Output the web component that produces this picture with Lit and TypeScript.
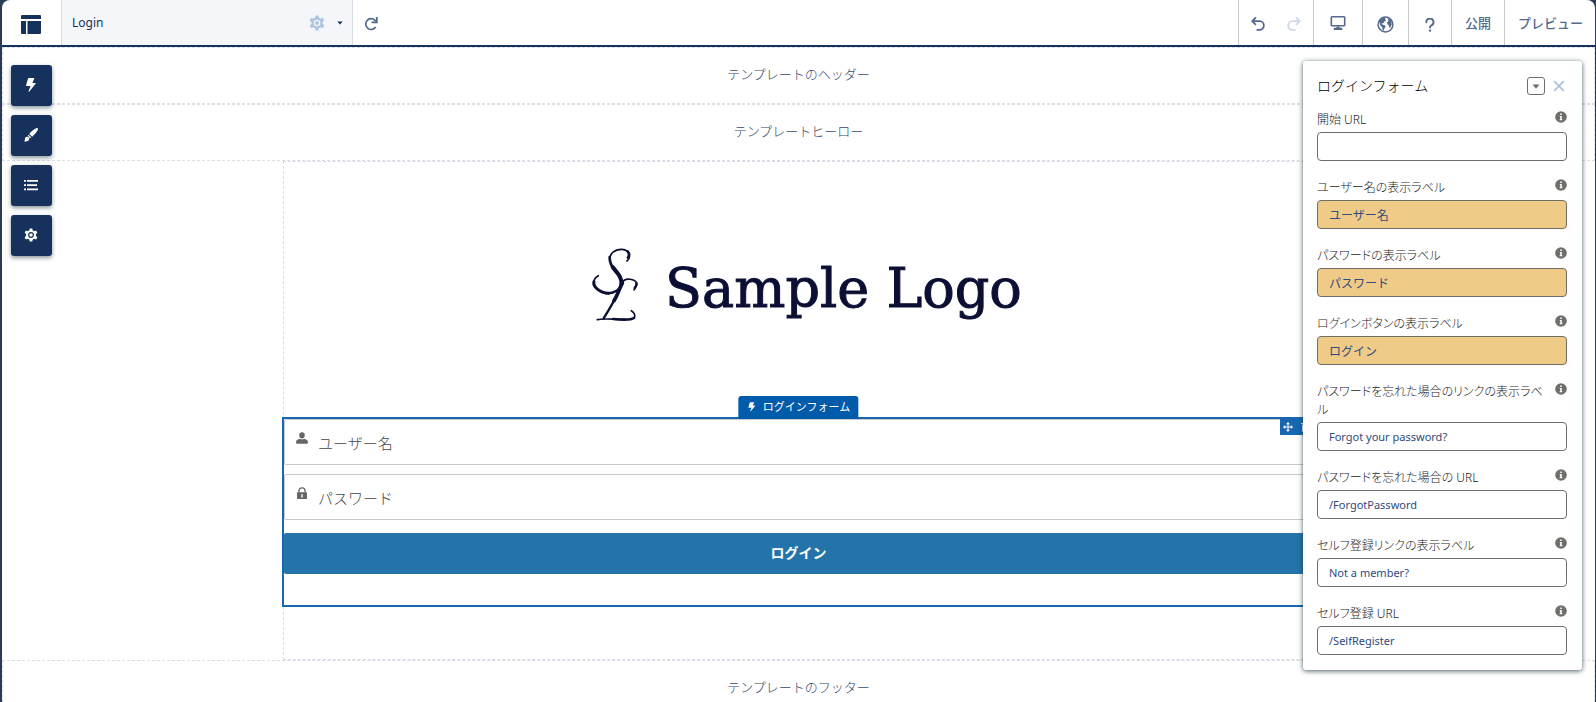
import { LitElement, html, css, svg } from "lit";
import { customElement, property, state } from "lit/decorators.js";
import { classMap } from "lit/directives/class-map.js";

const gear = svg`
  <path fill="currentColor" fill-rule="evenodd" d="M8.4 0h3.2l.6 2.7c.6.2 1.200.5 1.700.9l2.600-.9 1.700 2.900-2 1.900c.1.600.1 1.300 0 1.900l2 2-1.600 2.800-2.700-.8c-.5.4-1.100.7-1.700.9L11.600 17H8.400l-.6-2.700c-.6-.2-1.200-.5-1.700-.9l-2.700.8-1.600-2.800 2-2c-.1-.6-.1-1.300 0-1.900l-2-1.900 1.700-2.900 2.600.9c.5-.4 1.100-.7 1.700-.9zM10 4.800a3.700 3.700 0 1 0 0 7.400 3.700 3.700 0 0 0 0-7.400z"/>
  <circle cx="10" cy="8.500" r="2.200" fill="currentColor"/>`;

const bolt = svg`<path fill="currentColor" d="M4.500 0h6.200L8.500 5.300h3.300c.5 0 .6.400.3.700L5 14.600c-.3.300-.7.100-.6-.3L6.500 8.600H2.200c-.5 0-.6-.3-.5-.6L3.800.5c.1-.3.300-.5.700-.5z"/>`;

const icons = {
  layout: { box: "0 0 20 19", body: svg`<path fill="currentColor" d="M1 0h18a1 1 0 0 1 1 1v3H0V1a1 1 0 0 1 1-1zM0 6h5v13H1a1 1 0 0 1-1-1zM6.500 6H20v12a1 1 0 0 1-1 1H6.500z"/>` },
  gear: { box: "1 0 18 17", body: gear },
  bolt: { box: "0 0 14 15", body: bolt },
  caret: { box: "0 0 8 5", body: svg`<path fill="currentColor" d="M.5.5h7L4.400 4.300a.5.5 0 0 1-.8 0z"/>` },
  refresh: { box: "0 0 14 14", body: svg`<path fill="none" stroke="currentColor" stroke-width="1.700" d="M11.700 10A5.400 5.400 0 1 1 11 3.300L12.500 5"/><path fill="currentColor" d="M12 0h1.700v6.200H7.600V4.600H12z"/>` },
  undo: { box: "0 0 14 14", body: svg`<path fill="none" stroke="currentColor" stroke-width="1.800" stroke-linecap="round" stroke-linejoin="round" d="M4.400 1 1.200 4.200l3.200 3.200M1.500 4.200h7a4.300 4.300 0 0 1 0 8.700H6.300"/>` },
  redo: { box: "0 0 14 14", body: svg`<path fill="none" stroke="currentColor" stroke-width="1.800" stroke-linecap="round" stroke-linejoin="round" d="M9.600 1l3.200 3.200-3.200 3.200M12.500 4.200h-7a4.300 4.300 0 0 0 0 8.700h2.200"/>` },
  desktop: { box: "0 0 15 14", body: svg`<rect x=".8" y=".8" width="13.400" height="8.900" rx=".8" fill="none" stroke="currentColor" stroke-width="1.600"/><path fill="currentColor" d="M6 10.500h3v1.300h2.200c.4 0 .6.300.6.600V14H3.200v-1.600c0-.3.200-.6.600-.6H6z"/>` },
  globe: { box: "0 0 17 17", body: svg`<circle cx="8.500" cy="8.500" r="7.400" fill="none" stroke="currentColor" stroke-width="1.500"/><path fill="currentColor" d="M2 5.200 4.800 2.300 8.500 1.500 8 3.200 9.200 4.300 7.300 5.600 6.400 7.300 4.700 7.200 5.300 8.600 7.700 9.300 8.700 11 7.300 12.400 6.900 14.800 5.500 13.500 5.200 11.200 3.300 9.300zM10.400 2.300 13.600 3.500 15.500 6.500 14.300 6.300 14.800 8.600 13.400 11.300 12.200 11.700 11.800 9.200 10.300 8.300 10.100 6.300 11.700 5z"/>` },
  help: { box: "0 0 10 14", body: svg`<path fill="none" stroke="currentColor" stroke-width="1.900" stroke-linecap="round" d="M1.300 4.200a3.600 3.600 0 1 1 5.200 3.100C5.300 8 5 8.400 5 9.600"/><circle cx="5" cy="12.600" r="1.200" fill="currentColor"/>` },
  brush: { box: "0 0 14 14", body: svg`<path fill="currentColor" d="M13.700.3c.5.500.3 1.300-.2 2.200-1.100 2-3.300 4.600-5.300 6.200L5.300 5.900C7 3.900 9.600 1.600 11.600.5c.9-.5 1.600-.7 2.100-.2zM4.500 6.800l2.800 2.700-1 .8-2.500-2.500zM3 8.700c1.300-.2 2.500 1 2.300 2.300C5 13 2.800 13.900 0 13.200c1.200-.7.800-1.500 1-2.700.2-1 .9-1.700 2-1.800z"/>` },
  list: { box: "0 0 14 11", body: svg`<path fill="currentColor" d="M0 .5h2v1.800H0zM3 .5h11v1.800H3zM0 4.700h2v1.800H0zM3 4.700h10v1.800H3zM0 8.900h2v1.800H0zM3 8.900h11v1.800H3z"/>` },
  user: { box: "0 0 12 12", body: svg`<path fill="currentColor" d="M6 .3c1.700 0 2.800 1.200 2.800 2.900S7.700 6.600 6 6.600 3.200 4.900 3.200 3.200 4.300.3 6 .3zM3.800 6.800c1.300.9 3.100.9 4.400 0 2 .5 3.800 1.400 3.800 3.400 0 .9-.5 1.500-1.300 1.500H1.300C.5 11.700 0 11.100 0 10.200c0-2 1.800-2.900 3.800-3.400z"/>` },
  lock: { box: "0 0 12 12", body: svg`<path fill="none" stroke="currentColor" stroke-width="1.300" d="M2.900 5.500V4a3.100 3.100 0 0 1 6.200 0v1.500"/><path fill="currentColor" fill-rule="evenodd" d="M1.600 5.300h8.800c.4 0 .6.200.6.600v5.300c0 .5-.3.800-.8.800H1.800c-.5 0-.8-.3-.8-.8V5.900c0-.4.2-.6.600-.6zm3.700 1.900v3.300h1.400V7.200z"/>` },
  info: { box: "0 0 12 12", body: svg`<circle cx="6" cy="6" r="5.800" fill="currentColor"/><path fill="#fff" d="M5.200 2.600h1.600v1.500H5.200zM4.700 5h2.100v3.300h.6v.9H4.600v-.9h.6V5.800h-.5z"/>` },
  close: { box: "0 0 12 12", body: svg`<path fill="none" stroke="currentColor" stroke-width="1.700" d="M1.200 1.200l9.600 9.600M10.800 1.200l-9.600 9.600"/>` },
  move: { box: "0 0 10 10", body: svg`<path fill="none" stroke="currentColor" stroke-width="1" d="M5 1v8M1 5h8"/><path fill="currentColor" d="M5 0l1.900 2.200H3.100zM5 10 3.100 7.800h3.800zM0 5l2.200-1.900v3.800zM10 5 7.800 6.900V3.100z"/>` },
  trash: { box: "0 0 10 10", body: svg`<path fill="currentColor" d="M0 1h3.500V0h3v1H10v1.200H0zM1 3h8v6a1 1 0 0 1-1 1H2a1 1 0 0 1-1-1z"/>` },
};
type IconName = keyof typeof icons;

@customElement("ui-icon")
export class UiIcon extends LitElement {
  @property() name: IconName = "gear";
  static styles = css`
    :host { display: inline-flex; flex: none; }
    svg { display: block; width: 100%; height: 100%; }
  `;
  render() {
    const icon = icons[this.name];
    return html`<svg viewBox=${icon.box} aria-hidden="true">${icon.body}</svg>`;
  }
}

@customElement("sample-logo")
export class SampleLogo extends LitElement {
  static styles = css`
    :host {
      display: flex;
      align-items: flex-start;
      justify-content: center;
      gap: 25px;
      color: #0b0f33;
    }
    .mark { width: 50px; height: 78px; flex: none; }
    .name {
      padding-top: 12px;
      font: 400 54px/64px "DejaVu Serif", serif;
      -webkit-text-stroke: 1px currentColor;
      white-space: nowrap;
    }
  `;
  render() {
    return html`
      <svg class="mark" viewBox="60 40 150 234" fill="none" stroke="currentColor" stroke-linecap="round" aria-hidden="true">
        <path stroke-width="5" d="M171 88C182 80 182 55 156 53C134 52 119 66 119 84"/>
        <path stroke-width="8" d="M174 78C179 70 178 64 173 59"/>
        <path stroke-width="8" d="M119 76C118 96 128 110 140 124"/>
        <path stroke-width="12" d="M128 106C148 130 157 142 154 158"/>
        <path stroke-width="7" d="M155 152C153 174 132 186 108 185"/>
        <path stroke-width="9" d="M116 185C88 183 68 165 72 150"/>
        <path stroke-width="5" d="M71 154C71 143 77 136 85 132"/>
        <path stroke-width="5" d="M192 175C196 166 203 160 200 154C196 144 166 134 157 153"/>
        <path stroke-width="7" d="M194 169C198 163 201 160 199 154"/>
        <path stroke-width="11" d="M157 154C150 166 144 188 132 207"/>
        <path stroke-width="7" d="M134 203C125 222 112 242 101 260"/>
        <path stroke-width="5" d="M82 264C100 259 135 264 165 263"/>
        <path stroke-width="8" d="M130 262C160 265 184 265 192 259"/>
        <path stroke-width="5" d="M193 258C197 250 191 241 184 237"/>
      </svg>
      <span class="name">Sample Logo</span>
    `;
  }
}

const UI_FONT = css`"Noto Sans", "Noto Sans CJK JP", sans-serif`;

@customElement("builder-bar")
export class BuilderBar extends LitElement {
  static styles = css`
    :host {
      display: flex;
      height: 45px;
      flex: none;
      border-bottom: 2px solid #16325c;
      border-radius: 8px 8px 0 0;
      background: #fff;
      color: #54698d;
      overflow: hidden;
    }
    button {
      display: flex;
      align-items: center;
      justify-content: center;
      margin: 0;
      padding: 0 16px;
      border: 0;
      background: none;
      color: inherit;
      font: 500 13px/20px ${UI_FONT};
      white-space: nowrap;
    }
    .home { width: 59px; padding: 4px 2px 0 0; color: #16325c; }
    .home ui-icon { width: 20px; height: 19px; }
    .page {
      display: flex;
      align-items: center;
      justify-content: space-between;
      width: 280px;
      padding: 0 0 0 10px;
      border: solid #d8dde6;
      border-width: 0 1px;
      background: #f4f6f9;
      color: #16325c;
      font-size: 12px;
      line-height: 20px;
    }
    .page button { padding: 0 9px 0 0; gap: 12px; }
    .page .gear { width: 16px; height: 16px; color: #b0c4df; }
    .page .caret { width: 6px; height: 4px; color: #16325c; }
    .icon { width: 14px; height: 14px; }
    .refresh { padding: 2px 11px 0; }
    .tools { display: flex; margin-left: auto; }
    .group { display: flex; border-left: 1px solid #c9c9c9; }
    .history { padding: 0 12px; gap: 22px; }
    .history button { padding: 2px 0 0; }
    .history button:disabled { color: #d0d8e6; }
    .wide { width: 16px; height: 14px; }
    .site { padding: 4px 14px 0; }
    .globe { width: 17px; height: 17px; }
    .support { padding: 4px 16px 0; }
    .help { width: 10px; height: 14px; }
    .labelled { padding: 1px 13px 0; }
    .group:last-child .labelled { padding-right: 12px; }
  `;
  render() {
    return html`
      <button class="home" aria-label="ホーム"><ui-icon name="layout"></ui-icon></button>
      <div class="page">
        <span>Login</span>
        <button aria-label="ページ設定">
          <ui-icon class="gear" name="gear"></ui-icon>
          <ui-icon class="caret" name="caret"></ui-icon>
        </button>
      </div>
      <button class="refresh" aria-label="更新"><ui-icon class="icon" name="refresh"></ui-icon></button>
      <nav class="tools">
        <div class="group history">
          <button aria-label="元に戻す"><ui-icon class="icon" name="undo"></ui-icon></button>
          <button aria-label="やり直す" disabled><ui-icon class="icon" name="redo"></ui-icon></button>
        </div>
        <div class="group"><button aria-label="デスクトップ"><ui-icon class="wide" name="desktop"></ui-icon></button></div>
        <div class="group"><button class="site" aria-label="サイト"><ui-icon class="globe" name="globe"></ui-icon></button></div>
        <div class="group"><button class="support" aria-label="ヘルプ"><ui-icon class="help" name="help"></ui-icon></button></div>
        <div class="group"><button class="labelled">公開</button></div>
        <div class="group"><button class="labelled">プレビュー</button></div>
      </nav>
    `;
  }
}

@customElement("tool-rail")
export class ToolRail extends LitElement {
  static styles = css`
    :host { display: flex; flex-direction: column; gap: 9px; }
    button {
      display: grid;
      place-items: center;
      width: 41px;
      height: 41px;
      padding: 0 1px 1px 0;
      border: 0;
      border-radius: 3px;
      background: #16325c;
      color: #fff;
      box-shadow: 0 2px 4px rgba(22, 50, 60, 0.5);
    }
    ui-icon { width: 14px; height: 14px; }
  `;
  render() {
    const tools: [IconName, string][] = [
      ["bolt", "コンポーネント"],
      ["brush", "テーマ"],
      ["list", "ページ構造"],
      ["gear", "設定"],
    ];
    return tools.map(
      ([icon, label]) => html`<button aria-label=${label}><ui-icon name=${icon}></ui-icon></button>`
    );
  }
}

@customElement("login-form")
export class LoginForm extends LitElement {
  static styles = css`
    :host {
      display: block;
      position: relative;
      box-sizing: border-box;
      height: 190px;
      border: 2px solid #1767b0;
    }
    .tab {
      position: absolute;
      bottom: 100%;
      left: 50%;
      transform: translateX(-50%);
      display: flex;
      align-items: center;
      gap: 6px;
      padding: 1px 8px 2px 9px;
      border-radius: 3px 3px 0 0;
      background: #005bab;
      color: #fff;
      font-size: 11px;
      line-height: 20px;
      white-space: nowrap;
    }
    .tab ui-icon { width: 9px; height: 10px; }
    .handles {
      position: absolute;
      top: 0;
      right: 0;
      display: flex;
      gap: 8px;
      padding: 3px 2px 3px 3px;
      background: #1767b0;
      color: #fff;
    }
    .handles button { display: flex; padding: 0; border: 0; background: none; color: inherit; }
    .handles ui-icon { width: 10px; height: 10px; }
    form { display: flex; flex-direction: column; }
    .field {
      display: flex;
      gap: 10px;
      height: 44px;
      margin-bottom: 9px;
      padding-left: 11px;
      border: 1px solid #c9c9c9;
      border-radius: 2px;
      color: #666;
    }
    .field ui-icon { width: 12px; height: 12px; margin-top: 12px; }
    input {
      flex: 1;
      min-width: 0;
      padding: 2px 0 0;
      border: 0;
      outline: 0;
      background: none;
      color: #444;
      font: 300 15px/20px ${UI_FONT};
    }
    input::placeholder { color: #444; opacity: 1; }
    .submit {
      height: 41px;
      margin-top: 4px;
      padding: 0 0 2px;
      border: 0;
      border-radius: 2px;
      background: #2574a9;
      color: #fff;
      font: 700 14px/20px ${UI_FONT};
    }
  `;
  render() {
    return html`
      <div class="tab"><ui-icon name="bolt"></ui-icon>ログインフォーム</div>
      <form @submit=${(e: Event) => e.preventDefault()}>
        <label class="field"><ui-icon name="user"></ui-icon>
          <input type="text" placeholder="ユーザー名" aria-label="ユーザー名" /></label>
        <label class="field"><ui-icon name="lock"></ui-icon>
          <input type="password" placeholder="パスワード" aria-label="パスワード" /></label>
        <button class="submit">ログイン</button>
      </form>
      <div class="handles">
        <button aria-label="移動"><ui-icon name="move"></ui-icon></button>
        <button aria-label="削除"><ui-icon name="trash"></ui-icon></button>
      </div>
    `;
  }
}

interface Field { id: string; label: string; value: string; marked?: boolean }

@customElement("property-panel")
export class PropertyPanel extends LitElement {
  @state() private fields: Field[] = [
    { id: "start-url", label: "開始 URL", value: "" },
    { id: "user-label", label: "ユーザー名の表示ラベル", value: "ユーザー名", marked: true },
    { id: "pass-label", label: "パスワードの表示ラベル", value: "パスワード", marked: true },
    { id: "login-label", label: "ログインボタンの表示ラベル", value: "ログイン", marked: true },
    { id: "forgot-label", label: "パスワードを忘れた場合のリンクの表示ラベル", value: "Forgot your password?" },
    { id: "forgot-url", label: "パスワードを忘れた場合の URL", value: "/ForgotPassword" },
    { id: "self-label", label: "セルフ登録リンクの表示ラベル", value: "Not a member?" },
    { id: "self-url", label: "セルフ登録 URL", value: "/SelfRegister" },
  ];
  static styles = css`
    :host {
      display: block;
      box-sizing: border-box;
      width: 279px;
      padding: 14px 15px 15px 14px;
      border-radius: 3px;
      background: #fff;
      box-shadow: 0 1px 5px rgba(22, 50, 60, 0.8);
    }
    header { display: flex; align-items: center; margin-bottom: 14px; }
    h2 { flex: 1; margin: 0; color: #000; font-size: 14px; line-height: 22px; font-weight: 300; }
    header button {
      display: grid;
      place-items: center;
      width: 18px;
      height: 18px;
      box-sizing: border-box;
      padding: 0;
      border: 0;
      background: none;
      color: #a8c2e0;
    }
    header .menu { margin-right: 6px; border: 1px solid #706e6b; border-radius: 3px; color: #706e6b; }
    header .close { width: 16px; }
    .menu ui-icon { width: 8px; height: 5px; }
    .close ui-icon { width: 12px; height: 12px; }
    .fields { display: flex; flex-direction: column; gap: 18px; }
    .field { display: grid; grid-template-columns: 1fr auto; row-gap: 3px; }
    label {
      margin-right: 8px;
      color: #1c1c1c;
      font-size: 12px;
      line-height: 18px;
      font-weight: 300;
      font-feature-settings: "palt";
    }
    .field ui-icon { width: 12px; height: 12px; color: #706e6b; }
    input {
      grid-column: 1 / -1;
      box-sizing: border-box;
      width: 100%;
      height: 29px;
      padding: 0 11px;
      border: 1px solid #706e6b;
      border-radius: 4px;
      background: #fff;
      color: #2f4b7c;
      font: 400 11px/18px ${UI_FONT};
    }
    input.marked { background: #f0cb87; font-size: 12px; }
  `;
  render() {
    return html`
      <header>
        <h2>ログインフォーム</h2>
        <button class="menu" aria-label="メニュー"><ui-icon name="caret"></ui-icon></button>
        <button class="close" aria-label="閉じる"><ui-icon name="close"></ui-icon></button>
      </header>
      <div class="fields">
        ${this.fields.map(
          (f) => html`<div class="field">
            <label for=${f.id}>${f.label}</label>
            <ui-icon name="info"></ui-icon>
            <input id=${f.id} type="text" class=${classMap({ marked: !!f.marked })} .value=${f.value} />
          </div>`
        )}
      </div>
    `;
  }
}

@customElement("app-root")
export class AppRoot extends LitElement {
  static styles = css`
    :host {
      display: flex;
      flex-direction: column;
      box-sizing: border-box;
      height: 100vh;
      padding: 0 1px 0 2px;
      overflow: hidden;
      background: #2b3b55;
      font-family: ${UI_FONT};
    }
    main {
      position: relative;
      flex: 1;
      min-height: 0;
      overflow: hidden;
      background: #fff;
    }
    .region {
      padding: 16px 0 19px;
      border: 1px dashed #d8dde6;
      color: #33496b;
      font-size: 13px;
      line-height: 20px;
      font-weight: 300;
      text-align: center;
    }
    .content { display: grid; grid-template-columns: 3fr 11fr 3fr; }
    .column {
      grid-column: 2;
      padding-bottom: 52px;
      border: 1px dashed #d8dde6;
    }
    sample-logo { height: 172px; padding: 83px 0 0 15px; }
    login-form { margin: 0 -2px; }
    .rail { position: absolute; top: 18px; left: 9px; }
    .panel { position: absolute; top: 14px; right: 13px; }
  `;
  render() {
    return html`
      <builder-bar></builder-bar>
      <main>
        <div class="region">テンプレートのヘッダー</div>
        <div class="region">テンプレートヒーロー</div>
        <div class="content">
          <div class="column">
            <sample-logo></sample-logo>
            <login-form></login-form>
          </div>
        </div>
        <div class="region">テンプレートのフッター</div>
        <tool-rail class="rail"></tool-rail>
        <property-panel class="panel"></property-panel>
      </main>
    `;
  }
}
